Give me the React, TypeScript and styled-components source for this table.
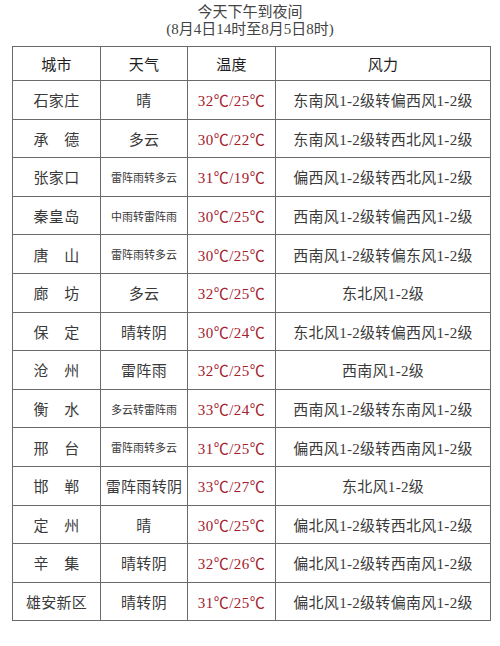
import React from 'react';
import styled, { createGlobalStyle } from 'styled-components';

const GlobalStyle = createGlobalStyle`
    html, body {
        margin: 0;
        padding: 0;
        background: #fff;
    }
`;

const Page = styled.div`
    width: 500px;
    height: 646px;
    background: #fff;
    font-family: "Liberation Serif", "Noto Sans CJK SC", serif;
    color: #3a3a3a;
    padding-top: 4px;
    box-sizing: border-box;
`;

const Title = styled.div`
    text-align: center;
    font-size: 15px;
    line-height: 17px;
    color: #444;
`;

const Sheet = styled.table`
    margin: 8px 0 0 12px;
    width: 479px;
    border-collapse: collapse;
    table-layout: fixed;
    border: 1.5px solid #707070;
`;

const Cell = styled.td<{ $small?: boolean; $hot?: boolean; $head?: boolean }>`
    border: 1.5px solid #6a6a6a;
    height: ${p => (p.$head ? '33px' : '37.6px')};
    padding: 0;
    text-align: center;
    vertical-align: middle;
    white-space: nowrap;
    font-weight: normal;
    font-size: ${p => (p.$small ? '11px' : '15px')};
    letter-spacing: ${p => (p.$small ? '0' : p.$hot ? '0.5px' : '0.3px')};
    color: ${p => (p.$hot ? '#a3202c' : p.$head ? '#1e1e1e' : '#3a3a3a')};
`;

type Row = { city: string; sky: string; small?: boolean; temp: string; wind: string };

const rows: Row[] = [
    { city: '石家庄', sky: '晴', temp: '32℃/25℃', wind: '东南风1-2级转偏西风1-2级' },
    { city: '承　德', sky: '多云', temp: '30℃/22℃', wind: '东南风1-2级转西北风1-2级' },
    { city: '张家口', sky: '雷阵雨转多云', small: true, temp: '31℃/19℃', wind: '偏西风1-2级转西北风1-2级' },
    { city: '秦皇岛', sky: '中雨转雷阵雨', small: true, temp: '30℃/25℃', wind: '西南风1-2级转偏西风1-2级' },
    { city: '唐　山', sky: '雷阵雨转多云', small: true, temp: '30℃/25℃', wind: '西南风1-2级转偏东风1-2级' },
    { city: '廊　坊', sky: '多云', temp: '32℃/25℃', wind: '东北风1-2级' },
    { city: '保　定', sky: '晴转阴', temp: '30℃/24℃', wind: '东北风1-2级转偏西风1-2级' },
    { city: '沧　州', sky: '雷阵雨', temp: '32℃/25℃', wind: '西南风1-2级' },
    { city: '衡　水', sky: '多云转雷阵雨', small: true, temp: '33℃/24℃', wind: '西南风1-2级转东南风1-2级' },
    { city: '邢　台', sky: '雷阵雨转多云', small: true, temp: '31℃/25℃', wind: '偏西风1-2级转西南风1-2级' },
    { city: '邯　郸', sky: '雷阵雨转阴', temp: '33℃/27℃', wind: '东北风1-2级' },
    { city: '定　州', sky: '晴', temp: '30℃/25℃', wind: '偏北风1-2级转西北风1-2级' },
    { city: '辛　集', sky: '晴转阴', temp: '32℃/26℃', wind: '偏北风1-2级转西南风1-2级' },
    { city: '雄安新区', sky: '晴转阴', temp: '31℃/25℃', wind: '偏北风1-2级转偏南风1-2级' },
];

const App = () => {
    return <Page>
        <GlobalStyle />
        <Title>今天下午到夜间</Title>
        <Title>(8月4日14时至8月5日8时)</Title>
        <Sheet>
            <colgroup>
                <col style={{width: '88px'}} />
                <col style={{width: '87px'}} />
                <col style={{width: '88px'}} />
                <col />
            </colgroup>
            <thead>
                <tr>
                    <Cell as="th" $head>城市</Cell>
                    <Cell as="th" $head>天气</Cell>
                    <Cell as="th" $head>温度</Cell>
                    <Cell as="th" $head>风力</Cell>
                </tr>
            </thead>
            <tbody>
                {rows.map(r => (
                    <tr key={r.city}>
                        <Cell>{r.city}</Cell>
                        <Cell $small={r.small}>{r.sky}</Cell>
                        <Cell $hot>{r.temp}</Cell>
                        <Cell>{r.wind}</Cell>
                    </tr>
                ))}
            </tbody>
        </Sheet>
    </Page>
}

export default App;
